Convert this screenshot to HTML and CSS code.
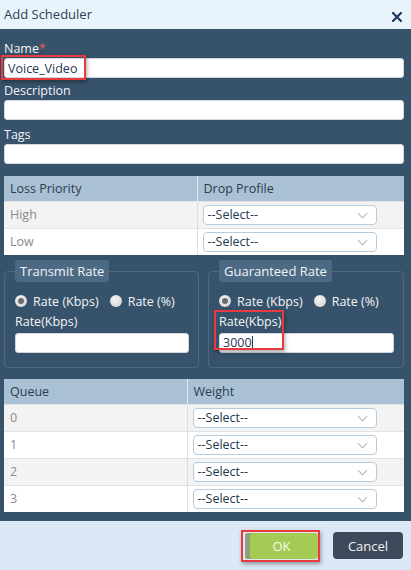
FILE: index.html
```html
<!DOCTYPE html>
<html>
<head>
<meta charset="utf-8">
<link rel="stylesheet" href="styles.css">
</head>
<body>
<div class="dialog">
  <header class="hd">
    <span class="title">Add Scheduler</span>
    <span class="close"><svg width="10" height="10" viewBox="0 0 10 10"><path d="M1 1L9 9M9 1L1 9" stroke="#1e3a56" stroke-width="2.2" stroke-linecap="square"/></svg></span>
  </header>
  <main class="bd">
    <div class="field">
      <label class="lbl">Name<span class="req">*</span></label>
      <div class="hl-wrap">
        <input class="txt" type="text" value="Voice_Video">
        <span class="hl hl-name"></span>
      </div>
    </div>
    <div class="field">
      <label class="lbl">Description</label>
      <input class="txt" type="text">
    </div>
    <div class="field tags">
      <label class="lbl">Tags</label>
      <input class="txt" type="text">
    </div>

    <table class="grid g1">
      <thead><tr><th class="c1">Loss Priority</th><th>Drop Profile</th></tr></thead>
      <tbody>
        <tr class="odd"><td class="c1">High</td><td class="sel-cell"><div class="sel">--Select--<span class="chev"></span></div></td></tr>
        <tr><td class="c1">Low</td><td class="sel-cell"><div class="sel">--Select--<span class="chev"></span></div></td></tr>
      </tbody>
    </table>

    <div class="rates">
      <fieldset class="fs">
        <legend class="lg">Transmit Rate</legend>
        <div class="radios">
          <span class="radio on"></span><span class="rl">Rate (Kbps)</span>
          <span class="radio"></span><span class="rl">Rate (%)</span>
        </div>
        <label class="lbl sm">Rate(Kbps)</label>
        <input class="txt" type="text">
      </fieldset>
      <fieldset class="fs">
        <legend class="lg">Guaranteed Rate</legend>
        <div class="radios">
          <span class="radio on"></span><span class="rl">Rate (Kbps)</span>
          <span class="radio"></span><span class="rl">Rate (%)</span>
        </div>
        <div class="hl-wrap">
          <label class="lbl sm">Rate(Kbps)</label>
          <div class="txt val">3000<span class="caret"></span></div>
          <span class="hl hl-rate"></span>
        </div>
      </fieldset>
    </div>

    <table class="grid g2">
      <thead><tr><th class="c1">Queue</th><th>Weight</th></tr></thead>
      <tbody>
        <tr class="odd"><td class="c1">0</td><td class="sel-cell"><div class="sel">--Select--<span class="chev"></span></div></td></tr>
        <tr><td class="c1">1</td><td class="sel-cell"><div class="sel">--Select--<span class="chev"></span></div></td></tr>
        <tr class="odd"><td class="c1">2</td><td class="sel-cell"><div class="sel">--Select--<span class="chev"></span></div></td></tr>
        <tr><td class="c1">3</td><td class="sel-cell"><div class="sel">--Select--<span class="chev"></span></div></td></tr>
      </tbody>
    </table>
  </main>
  <footer class="ft">
    <div class="ok-wrap"><button class="btn ok">OK</button><span class="hl hl-ok"></span></div>
    <button class="btn cancel">Cancel</button>
  </footer>
</div>
</body>
</html>
```

FILE: styles.css
```css
* { box-sizing: border-box; }
html, body { margin: 0; padding: 0; }
body {
  width: 411px;
  height: 570px;
  overflow: hidden;
  font-family: "Open Sans", "Noto Sans", sans-serif;
  font-size: 12px;
  background: #37526b;
}
.dialog {
  display: flex;
  flex-direction: column;
  height: 570px;
}
.hd {
  height: 29px;
  background: #e9f3fc;
  display: flex;
  align-items: center;
  justify-content: space-between;
  padding: 0 9px 0 4px;
  color: #2c4257;
  font-size: 13px;
}
.title { margin-top: -2px; }
.close { display: flex; margin-top: 4px; }
.bd {
  flex: 1;
  background: #37526b;
  padding: 7px 7px 0 4px;
}
.field { display: flex; flex-direction: column; }
.field.tags { margin-top: 2px; }
.lbl {
  color: #f2f4f6;
  font-size: 12.5px;
  line-height: 18px;
  padding-top: 4px;
}
.req { color: #e4545e; }
.txt {
  display: block;
  width: 100%;
  height: 20px;
  border: 1px solid #d0d6dc;
  border-radius: 3px;
  background: #fff;
  font-family: inherit;
  font-size: 12.5px;
  color: #1f3550;
  padding: 0 3px;
  margin: 0;
  outline: none;
}
.hl-wrap { position: relative; }
.hl {
  position: absolute;
  border: 2px solid #e83a3f;
  box-shadow: 1px 2px 4px rgba(0,0,0,0.35);
  pointer-events: none;
}
.hl-name { left: -3px; top: -3px; width: 85px; height: 25px; }
.grid {
  width: 400px;
  border-collapse: collapse;
  background: #fff;
  margin-top: 12px;
  font-size: 12.5px;
}
.grid th {
  background: #a9c0d5;
  color: #2c3d4e;
  font-weight: normal;
  text-align: left;
  height: 25px;
  padding: 0 6px;
  border-right: 1px solid #e3e8ee;
}
.grid th:last-child { border-right: none; }
.grid td {
  height: 27px;
  color: #8b8b8b;
  padding: 0 6px;
  border-right: 1px solid #dedede;
  border-top: 1px solid #e2e2e2;
}
.grid td:last-child { border-right: none; }
.grid tr.odd td { background: #f3f3f3; }
.g1 .c1 { width: 193px; }
.g2 .c1 { width: 183px; }
.grid td.sel-cell { padding: 0 27px 0 5px; }
.sel {
  position: relative;
  height: 20px;
  border: 1px solid #b8ccdc;
  border-radius: 4px;
  background: #fff;
  color: #23374d;
  line-height: 18px;
  padding-left: 4px;
}
.chev {
  position: absolute;
  right: 10px;
  top: 4px;
  width: 7px;
  height: 7px;
  border-right: 1px solid #b5b5b5;
  border-bottom: 1px solid #b5b5b5;
  transform: rotate(45deg);
}
.rates {
  display: grid;
  grid-template-columns: 195px 196px;
  column-gap: 9px;
  margin-top: 5px;
}
.fs {
  margin: 0;
  border: 1px solid #4e6880;
  border-radius: 4px;
  padding: 0 9px 14px 10px;
  min-width: 0;
}
.lg {
  background: #4d6a84;
  color: #f2f4f6;
  font-size: 13px;
  height: 22px;
  line-height: 22px;
  padding: 0 5px;
  border-radius: 3px;
  margin: 0;
}
.radios {
  display: flex;
  align-items: center;
  height: 20px;
  margin-top: 9px;
  color: #f2f4f6;
  font-size: 12.5px;
}
.radio {
  width: 12px;
  height: 12px;
  border-radius: 50%;
  background: radial-gradient(circle at 40% 35%, #f4f4f4, #cfcfcf);
  margin-right: 6px;
  position: relative;
}
.radio.on::after {
  content: "";
  position: absolute;
  left: 3px; top: 3px;
  width: 6px; height: 6px;
  border-radius: 50%;
  background: #6b6b6b;
}
.rl { margin-right: 11px; }
.lbl.sm { display: block; padding-top: 2px; margin-bottom: 2px; }
.val { line-height: 18px; padding-left: 3px; }
.caret {
  display: inline-block;
  width: 1px;
  height: 14px;
  background: #1f3550;
  vertical-align: -3px;
}
.hl-rate { left: -5px; top: -1px; width: 70px; height: 40px; }
.g2 { margin-top: 11px; }
.ft {
  height: 49px;
  background: #dae9f5;
  display: flex;
  justify-content: flex-end;
  align-items: center;
  padding: 0 8px 0 0;
  gap: 15px;
}
.btn {
  font-family: inherit;
  font-size: 13px;
  border: none;
  border-radius: 4px;
  height: 26px;
  margin: 0;
  cursor: pointer;
}
.ok-wrap { position: relative; display: flex; }
.ok {
  width: 73px;
  background: #a4cc54;
  color: #f5f9ee;
  border-radius: 3px;
  box-shadow: inset 5px 0 0 #8fa178;
}
.hl-ok { left: -4px; top: -3px; width: 79px; height: 32px; box-shadow: 1px 2px 4px rgba(0,0,0,0.35); }
.cancel {
  width: 70px;
  height: 27px;
  background: #3e4a5b;
  color: #f2f4f6;
}
```
